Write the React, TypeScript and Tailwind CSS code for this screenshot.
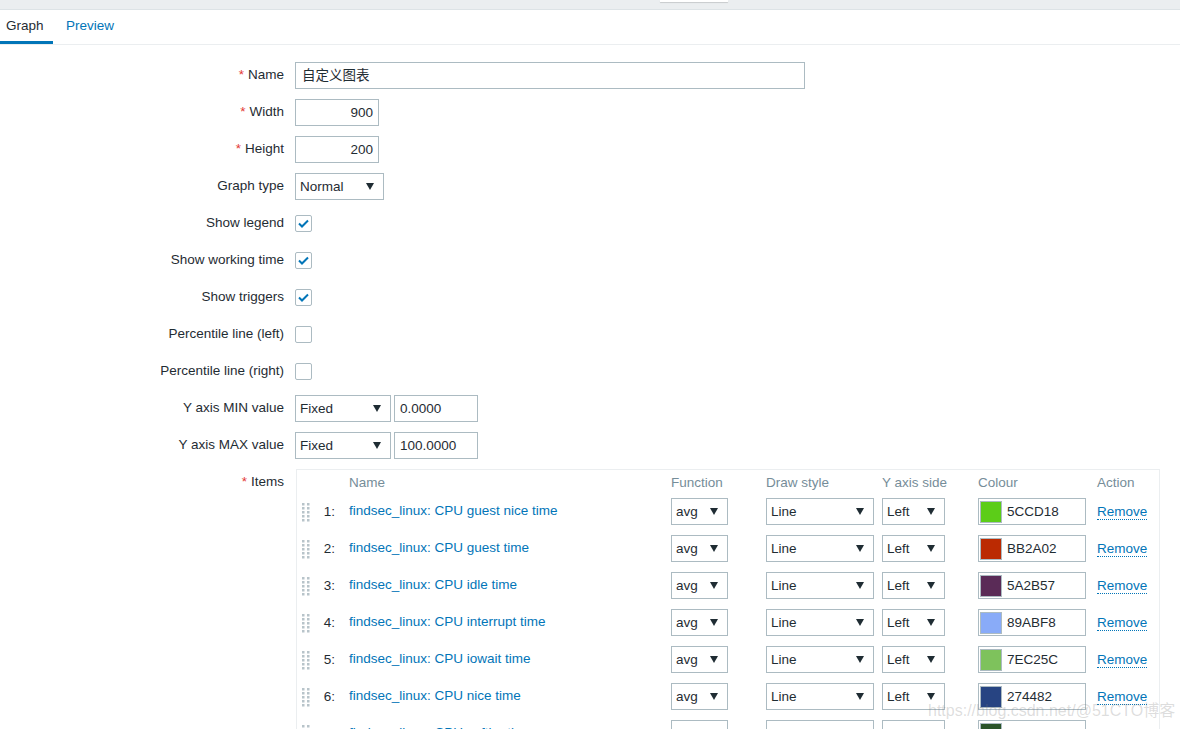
import React from 'react';

type Item = { name: string; colour: string };

const ITEMS: Item[] = [
  { name: 'findsec_linux: CPU guest nice time', colour: '5CCD18' },
  { name: 'findsec_linux: CPU guest time', colour: 'BB2A02' },
  { name: 'findsec_linux: CPU idle time', colour: '5A2B57' },
  { name: 'findsec_linux: CPU interrupt time', colour: '89ABF8' },
  { name: 'findsec_linux: CPU iowait time', colour: '7EC25C' },
  { name: 'findsec_linux: CPU nice time', colour: '274482' },
  { name: 'findsec_linux: CPU softirq time', colour: '2B5429' },
];

function Arrow() {
  return (
    <svg width="8" height="7" viewBox="0 0 8 7" className="shrink-0">
      <polygon points="0,0 8,0 4,7" fill="#1f2c33" />
    </svg>
  );
}

function Select({ value, className }: { value: string; className: string }) {
  return (
    <div
      className={`h-[27px] border border-[#acbbc2] bg-white flex items-center justify-between pl-[4px] pr-[9px] ${className}`}
    >
      <span>{value}</span>
      <Arrow />
    </div>
  );
}

function Checkbox({ checked }: { checked: boolean }) {
  return (
    <div className="w-[17px] h-[17px] border border-[#acbbc2] rounded-[2px] bg-white flex items-center justify-center">
      {checked && (
        <svg width="11" height="9" viewBox="0 0 11 9">
          <path d="M1 4.5 L4 7.5 L10 1.5" stroke="#0275b8" strokeWidth="2" fill="none" />
        </svg>
      )}
    </div>
  );
}

function Handle() {
  const dots = [];
  for (let r = 0; r < 5; r++) {
    for (let c = 0; c < 2; c++) {
      dots.push(<rect key={`${r}-${c}`} x={c * 5} y={r * 4 + 1} width="2.5" height="2.5" fill="#b8c4ca" />);
    }
  }
  return (
    <svg width="8" height="20" viewBox="0 0 8 20" className="shrink-0">
      {dots}
    </svg>
  );
}

function Row({ label, required, children }: { label: string; required?: boolean; children: React.ReactNode }) {
  return (
    <div className="flex items-center h-[27px]">
      <div className="w-[284px] text-right pb-[1px]">
        {required && <span className="text-[#e33734] mr-[4px]">*</span>}
        {label}
      </div>
      <div className="ml-[11px] flex items-center gap-[3px]">{children}</div>
    </div>
  );
}

export default function App() {
  return (
    <div className="relative w-[1180px] h-[729px] overflow-hidden bg-white text-[13.5px] leading-[16px] text-[#1f2c33] font-['Liberation_Sans','Noto_Sans_CJK_SC',sans-serif]">
      {/* top strip */}
      <div className="relative h-[10px] bg-[#ebeef0] border-b border-[#dde3e6]">
        <div className="absolute left-[660px] top-0 w-[68px] h-[2px] bg-white shadow-[0_1px_1px_rgba(0,0,0,0.15)]" />
      </div>

      {/* tabs */}
      <div className="flex h-[35px] border-b border-[#ebeef0]">
        <div className="w-[53px] pl-[6px] flex items-center border-b-[3px] border-[#0275b8] pt-[1px]">Graph</div>
        <div className="pl-[13px] flex items-center text-[#0275b8] pb-[2px]">Preview</div>
      </div>

      {/* form */}
      <div className="pt-[17px] flex flex-col gap-[10px]">
        <Row label="Name" required>
          <div className="w-[510px] h-[27px] border border-[#acbbc2] flex items-center pl-[6px]">自定义图表</div>
        </Row>
        <Row label="Width" required>
          <div className="w-[84px] h-[27px] border border-[#acbbc2] flex items-center justify-end pr-[5px]">900</div>
        </Row>
        <Row label="Height" required>
          <div className="w-[84px] h-[27px] border border-[#acbbc2] flex items-center justify-end pr-[5px]">200</div>
        </Row>
        <Row label="Graph type">
          <Select value="Normal" className="w-[89px]" />
        </Row>
        <Row label="Show legend">
          <Checkbox checked />
        </Row>
        <Row label="Show working time">
          <Checkbox checked />
        </Row>
        <Row label="Show triggers">
          <Checkbox checked />
        </Row>
        <Row label="Percentile line (left)">
          <Checkbox checked={false} />
        </Row>
        <Row label="Percentile line (right)">
          <Checkbox checked={false} />
        </Row>
        <Row label="Y axis MIN value">
          <Select value="Fixed" className="w-[96px]" />
          <div className="w-[84px] h-[27px] border border-[#acbbc2] flex items-center pl-[5px]">0.0000</div>
        </Row>
        <Row label="Y axis MAX value">
          <Select value="Fixed" className="w-[96px]" />
          <div className="w-[84px] h-[27px] border border-[#acbbc2] flex items-center pl-[5px]">100.0000</div>
        </Row>

        {/* items */}
        <div className="flex items-start">
          <div className="w-[284px] text-right pt-[5px]">
            <span className="text-[#e33734] mr-[4px]">*</span>
            Items
          </div>
          <div className="ml-[12px] w-[864px] border border-[#ebeef0]">
            <div className="flex h-[23px] pt-[5px] text-[#768d99]">
              <div className="w-[52px]" />
              <div className="w-[322px]">Name</div>
              <div className="w-[95px]">Function</div>
              <div className="w-[116px]">Draw style</div>
              <div className="w-[96px]">Y axis side</div>
              <div className="w-[119px]">Colour</div>
              <div>Action</div>
            </div>
            {ITEMS.map((it, i) => (
              <div key={it.name} className="flex items-center h-[37px]">
                <div className="w-[13px] flex justify-end">
                  <Handle />
                </div>
                <div className="w-[25px] text-right">{i + 1}:</div>
                <div className="w-[14px]" />
                <div className="w-[322px] text-[#0275b8] pb-[1px]">{it.name}</div>
                <div className="w-[95px]">
                  <Select value="avg" className="w-[57px]" />
                </div>
                <div className="w-[116px]">
                  <Select value="Line" className="w-[108px]" />
                </div>
                <div className="w-[96px]">
                  <Select value="Left" className="w-[63px]" />
                </div>
                <div className="w-[119px]">
                  <div className="w-[108px] h-[27px] border border-[#acbbc2] flex items-center pl-[1px]">
                    <div className="w-[22px] h-[22px] border border-[#acbbc2]" style={{ backgroundColor: `#${it.colour}` }} />
                    <span className="ml-[5px]">{it.colour}</span>
                  </div>
                </div>
                <div>
                  <span className="text-[#0275b8] border-b border-dotted border-[#0275b8]">Remove</span>
                </div>
              </div>
            ))}
          </div>
        </div>
      </div>

      {/* watermark */}
      <div className="absolute left-[928px] top-[702px] text-[16px] leading-[18px] text-[rgba(120,120,120,0.25)] font-['Liberation_Sans','Noto_Sans_CJK_SC',sans-serif]">
        https://blog.csdn.net/@51CTO博客
      </div>
    </div>
  );
}
